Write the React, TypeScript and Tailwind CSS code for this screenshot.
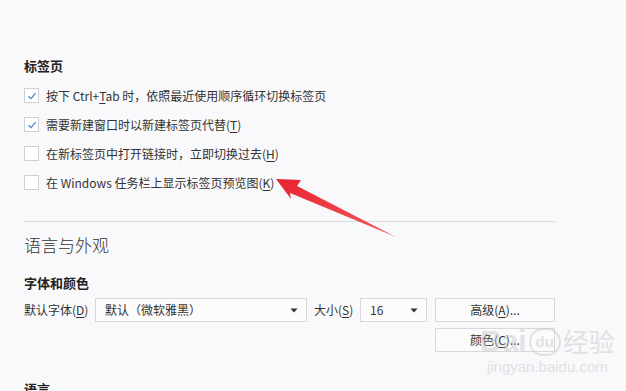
import * as React from "react";

const font = { fontFamily: '"Noto Sans CJK SC", "Noto Sans", sans-serif' };

function Check({ checked }: { checked: boolean }) {
  return (
    <span className="flex h-[15px] w-[15px] shrink-0 items-center justify-center border border-[#cfcfd4] bg-white">
      {checked && (
        <svg width="10" height="10" viewBox="0 0 10 10">
          <path d="M1.5 5.2 L4 7.6 L8.6 2.2" fill="none" stroke="#4a86c5" strokeWidth="1.3" />
        </svg>
      )}
    </span>
  );
}

function Key({ k }: { k: string }) {
  return (
    <span>
      (<span className="underline underline-offset-2">{k}</span>)
    </span>
  );
}

function Caret() {
  return (
    <svg width="8" height="5" viewBox="0 0 8 5">
      <path d="M0.5 0.5 L7.5 0.5 L4 4.5 Z" fill="#333" />
    </svg>
  );
}

const rows: { checked: boolean; text: React.ReactNode }[] = [
  {
    checked: true,
    text: (
      <>
        按下 Ctrl+<span className="underline underline-offset-2">T</span>ab 时，依照最近使用顺序循环切换标签页
      </>
    ),
  },
  { checked: true, text: <>需要新建窗口时以新建标签页代替<Key k="T" /></> },
  { checked: false, text: <>在新标签页中打开链接时，立即切换过去<Key k="H" /></> },
  { checked: false, text: <>在 Windows 任务栏上显示标签页预览图<Key k="K" /></> },
];

export default function App() {
  return (
    <div style={font} className="relative h-[391px] w-[626px] overflow-hidden bg-[#f9f9fb] text-[#333]">
      <div className="w-[531px] pl-[24px] pt-[57px] box-content">
        <p className="mb-[6px] h-[18px] text-[13px] font-bold leading-[18px] text-[#222]">标签页</p>
        {rows.map((r, i) => (
          <div key={i} className="flex h-[29px] items-center gap-[7px] text-[12px]">
            <Check checked={r.checked} />
            <span className="whitespace-nowrap">{r.text}</span>
          </div>
        ))}
        <div className="mt-[24px] h-px bg-[#dcdce0]" />
        <p className="mt-[11px] h-[24px] text-[17px] font-light leading-[24px] text-[#333]">语言与外观</p>
        <p className="mt-[17px] h-[18px] text-[13px] font-bold leading-[18px] text-[#222]">字体和颜色</p>
        <div className="mt-[6px] flex h-[24px] items-center text-[12px]">
          <span className="w-[71px] whitespace-nowrap">默认字体<Key k="D" /></span>
          <div className="flex h-[24px] w-[212px] items-center justify-between border border-[#d9d9dd] bg-[#fcfcfd] pl-[9px] pr-[8px]">
            <span>默认（微软雅黑）</span>
            <Caret />
          </div>
          <span className="ml-[7px] w-[46px] whitespace-nowrap">大小<Key k="S" /></span>
          <div className="flex h-[24px] w-[67px] items-center justify-between border border-[#d9d9dd] bg-[#fcfcfd] pl-[9px] pr-[8px]">
            <span>16</span>
            <Caret />
          </div>
          <button className="ml-[8px] h-[24px] w-[120px] border border-[#d9d9dd] bg-[#fbfbfc] text-[12px]">
            高级<Key k="A" />...
          </button>
        </div>
        <div className="mt-[6px] flex h-[24px] justify-end">
          <button className="h-[24px] w-[120px] border border-[#d9d9dd] bg-[#fbfbfc] text-[12px]">
            颜色<Key k="C" />...
          </button>
        </div>
        <p className="mt-[28px] h-[18px] text-[13px] font-bold leading-[18px] text-[#222]">语言</p>
      </div>

      <svg className="absolute left-0 top-0" width="626" height="391" viewBox="0 0 626 391">
        <defs>
          <linearGradient id="ar" x1="0" y1="0" x2="1" y2="1">
            <stop offset="0" stopColor="#e8232e" />
            <stop offset="1" stopColor="#ef5a5f" />
          </linearGradient>
        </defs>
        <polygon points="276,179 301,180 297,186 396,237 290,193 291,199" fill="url(#ar)" />
      </svg>

      <div className="pointer-events-none absolute left-[480px] top-[326px] flex flex-col items-center text-[#c4c4c8] opacity-45">
        <div className="flex items-end text-[30px] font-bold leading-[30px]" style={{ fontFamily: '"Liberation Sans", sans-serif' }}>
          <span>Bai</span>
          <span className="mx-[2px] flex h-[28px] w-[32px] items-center justify-center rounded-full border-2 border-[#c4c4c8] text-[15px]">du</span>
          <span className="text-[26px] font-normal" style={font}>经验</span>
        </div>
        <span className="mt-[3px] text-[15px] leading-[16px]" style={{ fontFamily: '"Liberation Sans", sans-serif' }}>jingyan.baidu.com</span>
      </div>
    </div>
  );
}
